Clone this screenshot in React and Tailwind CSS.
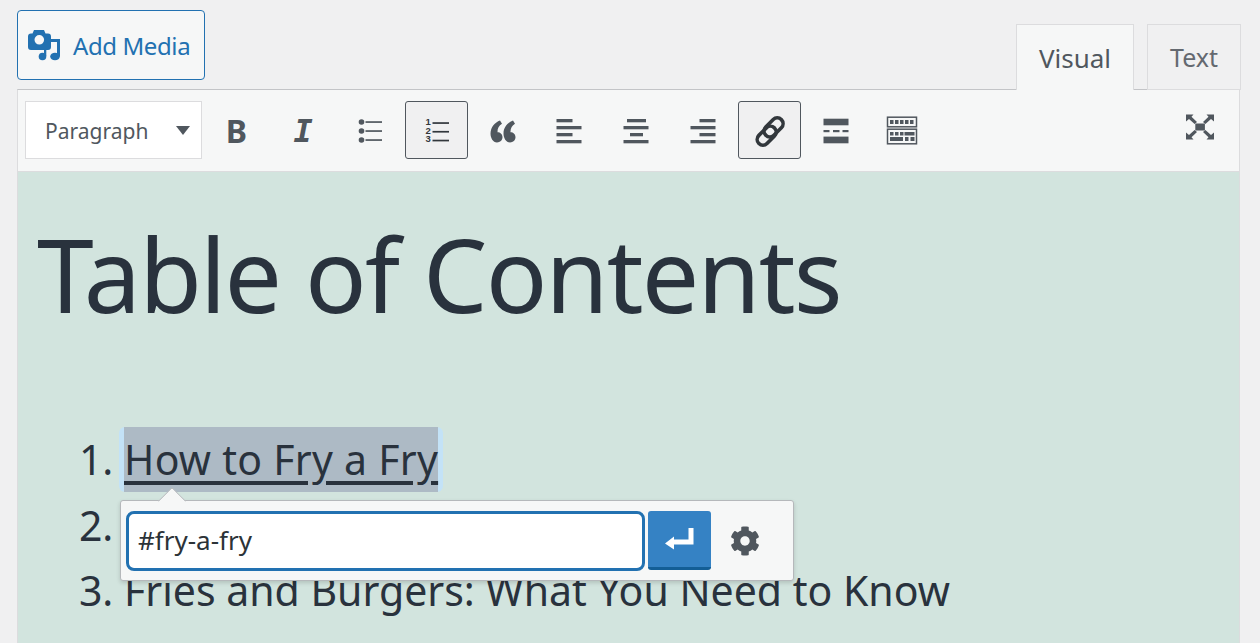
import React from "react";
import { FaCog } from "react-icons/fa";

const C = "#50575e";
const Box = ({ children, w = 30, h = 30 }) => (
  <svg width={w} height={h} viewBox={`0 0 ${w} ${h}`} fill={C}>{children}</svg>
);

const UL = () => (
  <Box>
    {[6, 15, 24].map((y) => (
      <g key={y}>
        <circle cx="6.5" cy={y} r="2.8" />
        <rect x="10.5" y={y - 0.8} width="16.5" height="1.7" />
      </g>
    ))}
  </Box>
);
const OL = () => (
  <Box>
    {[["1", 9], ["2", 17.5], ["3", 26]].map(([t, y]) => (
      <text key={t} x="4.5" y={y} fontSize="9.5" fontWeight="700" fontFamily="'Liberation Sans', sans-serif" fill="#32373c">{t}</text>
    ))}
    {[7, 15.7, 24.5].map((y) => (
      <rect key={y} x="11.5" y={y - 0.8} width="16.5" height="1.7" fill="#32373c" />
    ))}
  </Box>
);
const Quote = () => (
  <Box>
    <path d="M12 4.5C7 6.5 2.5 11 2.5 17.5 2.5 22 5 26.5 9 26.5 12 26.5 14.5 24.3 14.5 21.3 14.5 18.3 12.3 16.3 9.5 16.3 9.3 12.5 11 9.5 14 7.8Z" />
    <path d="M12 4.5C7 6.5 2.5 11 2.5 17.5 2.5 22 5 26.5 9 26.5 12 26.5 14.5 24.3 14.5 21.3 14.5 18.3 12.3 16.3 9.5 16.3 9.3 12.5 11 9.5 14 7.8Z" transform="translate(13 0)" />
  </Box>
);
const Align = ({ rows }) => (
  <Box>
    {rows.map(([x, w], i) => (
      <rect key={i} x={x} y={3 + i * 7} width={w} height="3.3" />
    ))}
  </Box>
);
const Hr = () => (
  <Box>
    <rect x="2.5" y="2.7" width="25" height="6.6" />
    <rect x="2.5" y="14" width="6" height="2.2" />
    <rect x="12" y="14" width="6.5" height="2.2" />
    <rect x="21.5" y="14" width="6" height="2.2" />
    <rect x="2.5" y="20.6" width="25" height="6.7" />
  </Box>
);
const Sink = () => (
  <Box w={32} h={30}>
    <rect x="1.5" y="1.2" width="29" height="9.6" fill="none" stroke={C} strokeWidth="1.5" />
    {[4, 9, 14, 19, 24].map((x) => (
      <rect key={x} x={x} y="4" width="3.5" height="4" />
    ))}
    <rect x="1.5" y="13.2" width="29" height="14.6" fill="none" stroke={C} strokeWidth="1.5" />
    {[4, 9, 14, 18.5].map((x) => (
      <rect key={x} x={x} y="16" width="3.5" height="3.5" />
    ))}
    <rect x="22" y="16" width="6.5" height="3.5" />
    <rect x="4" y="21" width="13" height="4" />
    <rect x="19" y="21" width="3.5" height="4" />
    <rect x="24.5" y="21" width="4" height="4" />
  </Box>
);
const Fullscreen = () => (
  <Box>
    <rect x="10.3" y="11.5" width="9.6" height="7" />
    <path d="M1 2.5H8.5L6.5 4.8 12 10 9.6 12 4 7 1 9.5Z" />
    <path d="M29 2.5H21.5L23.5 4.8 18 10 20.4 12 26 7 29 9.5Z" />
    <path d="M1 27.5H8.5L6.5 25.2 12 20 9.6 18 4 23 1 20.5Z" />
    <path d="M29 27.5H21.5L23.5 25.2 18 20 20.4 18 26 23 29 20.5Z" />
  </Box>
);
const ChainLink = () => (
  <svg width="34" height="34" viewBox="0 0 34 34" fill="none" stroke="#32373c" strokeWidth="3.6" className="ml-[3px]">
    <rect x="15" y="3.5" width="11.5" height="22" rx="5.7" transform="rotate(45 21.5 12.5)" />
    <rect x="7" y="10.5" width="11.5" height="22" rx="5.7" transform="rotate(45 12.5 21.5)" />
  </svg>
);
const MediaIcon = () => (
  <svg width="32" height="32" viewBox="0 0 32 32" fill="#2271b1" className="shrink-0">
    <path fillRule="evenodd" d="M6 0H16L17.5 3.5H20A3 3 0 0 1 23 6.5V17A3 3 0 0 1 20 20H3A3 3 0 0 1 0 17V6.5A3 3 0 0 1 3 3.5H4.5ZM11.3 5A4.8 4.8 0 1 0 11.3 14.6 4.8 4.8 0 1 0 11.3 5Z" />
    <path d="M23 9H32V26.5H29V12H23Z" />
    <ellipse cx="27" cy="26.5" rx="4.8" ry="3.8" />
    <ellipse cx="14.5" cy="26.5" rx="3.8" ry="3.8" />
    <rect x="16" y="20" width="2.3" height="6" />
  </svg>
);
const Enter = () => (
  <svg width="30" height="22" viewBox="0 0 30 22" fill="#fff">
    <path d="M0 15.5 9 8.5V11.5H23.5V0H28.5V16.5H9V21.5Z" />
  </svg>
);

const Btn = ({ children, active }) => (
  <div
    className={
      "flex h-[58px] w-[63px] shrink-0 items-center justify-center rounded-[3px] border pt-[2px] " +
      (active ? "border-[#50575e] bg-[#f0f0f1]" : "border-transparent")
    }
  >
    {children}
  </div>
);

export default function App() {
  return (
    <div
      className="relative h-[643px] w-[1260px] overflow-hidden bg-[#f0f0f1] pl-[17px] pr-[20px] pt-[10px]"
      style={{ fontFamily: "'Noto Sans', sans-serif" }}
    >
      <div className="flex h-[80px] items-start justify-between">
        <div className="flex h-[70px] w-[188px] items-center gap-[13px] rounded-[4px] border border-[#2271b1] bg-[#f6f7f7] pl-[10px] pt-[2px] text-[24px] tracking-[-0.4px] text-[#2271b1]">
          <MediaIcon />
          <span>Add Media</span>
        </div>
        <div className="relative z-10 -mr-px mt-[14px] flex h-[66px] gap-[13px]">
          <div className="flex w-[118px] items-center justify-center border border-b-0 border-[#dcdcde] bg-[#f6f7f7] pt-[2px] text-[26px] text-[#50575e]">Visual</div>
          <div className="flex w-[94px] items-center justify-center border border-[#dcdcde] bg-[#f0f0f1] pt-[2px] text-[25px] text-[#646970]">Text</div>
        </div>
      </div>
      <div className="-mt-px h-[600px] border-x border-t border-x-[#dcdcde] border-t-[#c3c4c7]">
        <div className="flex h-[82px] items-center border-b border-[#dcdcde] bg-[#f6f7f7] pl-[7px] pr-[8px] pb-[1px]">
          <div className="flex h-[58px] w-[177px] items-center justify-between border border-[#dcdcde] bg-white pl-[19px] pr-[11px] text-[21px] text-[#50575e]">
            <span className="pt-[4px]">Paragraph</span>
            <svg width="14" height="9" viewBox="0 0 14 9" fill={C}><path d="M0 0H14L7 9Z" /></svg>
          </div>
          <div className="ml-[3px] flex flex-1 items-center gap-[3.6px]">
            <Btn><span className="text-[32px] font-bold leading-none text-[#50575e]">B</span></Btn>
            <Btn><span className="text-[32px] font-bold italic leading-none text-[#50575e]" style={{ fontFamily: "'DejaVu Sans Mono', monospace" }}>I</span></Btn>
            <Btn><UL /></Btn>
            <Btn active><OL /></Btn>
            <Btn><Quote /></Btn>
            <Btn><Align rows={[[2.5, 16], [2.5, 25], [2.5, 16], [2.5, 25]]} /></Btn>
            <Btn><Align rows={[[6, 19], [2.5, 25], [9, 13], [2.5, 25]]} /></Btn>
            <Btn><Align rows={[[11.5, 16], [2.5, 25], [11.5, 16], [2.5, 25]]} /></Btn>
            <Btn active><ChainLink /></Btn>
            <Btn><Hr /></Btn>
            <Btn><Sink /></Btn>
            <div className="ml-auto mr-[16px] -mt-[7px]"><Fullscreen /></div>
          </div>
        </div>
        <div className="h-[520px] bg-[#d2e4de] pl-[19px] pt-[42px] text-[#29323d]">
          <h1 className="text-[102px] font-normal leading-[120px] tracking-[-1.8px]">Table of Contents</h1>
          <ol className="mt-[93px] list-decimal pl-[87px] text-[41px] leading-[65.5px]">
            <li>
              <span className="-ml-[5px] inline-block rounded-[6px] bg-[#c3e2f7] px-[5px] align-top leading-[65px]">
                <span className="inline-block bg-[#adbac5] tracking-[0.25px] underline decoration-[4px] underline-offset-[6px]">How to Fry a Fry</span>
              </span>
            </li>
            <li>&nbsp;</li>
            <li>Fries and Burgers: What You Need to Know</li>
          </ol>
        </div>
      </div>
      <div className="absolute left-[120px] top-[500px] z-20 flex h-[81px] w-[674px] items-center rounded-[3px] border border-[#b5b8bb] bg-[#f6f7f7] pl-[5px] shadow-[0_2px_4px_rgba(0,0,0,0.15)]">
        <div className="absolute left-[41px] top-[-10px] h-[20px] w-[20px] rotate-45 rounded-tl-[2px] border-l border-t border-[#b5b8bb] bg-[#f6f7f7]" />
        <div className="relative flex h-[60px] w-[519px] items-center rounded-[8px] border-[3px] border-[#2271b1] bg-white pl-[9px] text-[26px] text-[#2c3338]">#fry-a-fry</div>
        <div className="relative ml-[3px] flex h-[59px] w-[63px] items-center justify-center rounded-[3px] border-b-[3px] border-[#135e96] bg-[#3582c4]">
          <Enter />
        </div>
        <div className="ml-[19px]"><FaCog size={30} color={C} /></div>
      </div>
    </div>
  );
}
